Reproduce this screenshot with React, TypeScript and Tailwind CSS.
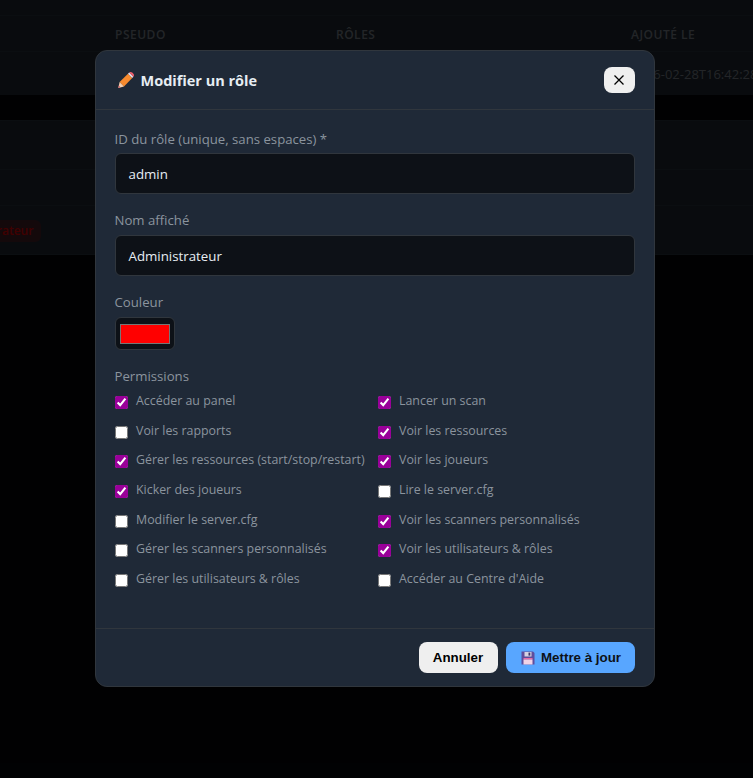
import React from 'react';

const perms: [string, boolean, string, boolean][] = [
  ['Accéder au panel', true, 'Lancer un scan', true],
  ['Voir les rapports', false, 'Voir les ressources', true],
  ['Gérer les ressources (start/stop/restart)', true, 'Voir les joueurs', true],
  ['Kicker des joueurs', true, 'Lire le server.cfg', false],
  ['Modifier le server.cfg', false, 'Voir les scanners personnalisés', true],
  ['Gérer les scanners personnalisés', false, 'Voir les utilisateurs & rôles', true],
  ['Gérer les utilisateurs & rôles', false, "Accéder au Centre d'Aide", false],
];

const Perm = ({ label, checked }: { label: string; checked: boolean }) => (
  <label className="flex items-start gap-[8.5px] h-[20px] text-[12.4px] leading-[20px] font-medium text-[#8b949e]">
    <input type="checkbox" checked={checked} readOnly className="w-[13px] h-[13px] mt-[5px] shrink-0 accent-[#990099]" />
    <span className="whitespace-nowrap">{label}</span>
  </label>
);

const PencilIcon = () => (
  <svg width="16" height="16" viewBox="0 0 16 16" className="shrink-0">
    <path d="M1.6 10 10 1.8l4.2 4.2L6 14.4z" fill="#f78a2e" />
    <path d="M10 1.8l1.2-1.2 4.2 4.2L14.2 6z" fill="#e4e0ec" />
    <path d="M11.2.6c1-.8 2-.8 3 0l1.2 1.2c.8 1 .8 2 0 3z" fill="#f0606e" />
    <path d="M1.6 10 6 14.4.3 15.9z" fill="#f7cfae" />
    <path d="M.9 13.6l1.6 1.6-2.2.7z" fill="#d9606a" />
  </svg>
);

const SaveIcon = () => (
  <svg width="14" height="14" viewBox="0 0 14 14" className="shrink-0">
    <path d="M.5.5h11.5L13.5 2v11.5H.5z" fill="#5f4d9c" />
    <rect x="3.5" y="1" width="7" height="4.5" fill="#d6d2e2" />
    <rect x="7.5" y="1.6" width="1.8" height="3" fill="#3f3566" />
    <rect x="2.5" y="7" width="9" height="1.5" fill="#e86aa6" />
    <rect x="2.5" y="8.5" width="9" height="5" fill="#f2d3e6" />
  </svg>
);

const Field = ({ label, value, first }: { label: string; value: string; first?: boolean }) => (
  <div className="mb-[17px]">
    <div className={`text-[13.2px] leading-[18px] font-medium text-[#8b949e] ${first ? 'mb-[5px]' : 'mb-[6px]'}`}>{label}</div>
    <div className="h-[41px] flex items-center pt-[2px] px-[13px] bg-[#0d1117] border border-[#30363d] rounded-[6px] text-[13.3px] text-[#e6edf3]">
      {value}
    </div>
  </div>
);

export default function App() {
  return (
    <div className="relative w-[753px] h-[778px] overflow-hidden bg-[#05070a] font-['Open_Sans','Noto_Sans',sans-serif]">
      {/* page behind the modal */}
      <div className="h-[95px] bg-[#242e3a]">
        <div className="h-[16px] border-b border-[#2f3a46]" />
        <div className="h-[36px] flex items-center pt-[2px] text-[12px] font-semibold tracking-[0.5px] text-[#8b949e] border-b border-[#2f3a46]">
          <span className="ml-[115px] w-[221px]">PSEUDO</span>
          <span className="w-[295px]">RÔLES</span>
          <span>AJOUTÉ LE</span>
        </div>
        <div className="flex items-center pt-[3px] h-[43px] text-[13px] text-[#8b949e] pl-[631px] whitespace-nowrap">2026-02-28T16:42:28</div>
      </div>
      <div className="h-[25px]" />
      <div className="h-[135px] bg-[#242e3a] border-y border-[#2f3a46]">
        <div className="h-[49px] border-b border-[#2f3a46]" />
        <div className="h-[36px] border-b border-[#2f3a46]" />
        <div className="h-[47px] flex items-center pt-[2px]">
          <span className="ml-[-63px] px-[8px] py-[2px] rounded-[6px] bg-[#ff0000]/20 text-[12px] font-semibold text-[#ff0000]">Administrateur</span>
        </div>
      </div>

      {/* overlay */}
      <div className="absolute inset-0 bg-black/75 flex items-start justify-center pt-[50px] pr-[4px]">
        <div className="w-[560px] h-[637px] flex flex-col bg-[#1f2937] border border-[#30363d] rounded-[12px]">
          <div className="h-[59px] shrink-0 flex items-center justify-between pl-[22px] pr-[19px] border-b border-[#30363d]">
            <div className="flex items-center gap-[7px] text-[14.5px] font-bold text-[#e6edf3]">
              <PencilIcon />
              <span className="pt-[1px]">Modifier un rôle</span>
            </div>
            <button className="w-[31px] h-[26px] flex items-center justify-center rounded-[8px] bg-[#efefef] text-black">
              <svg width="10" height="10" viewBox="0 0 10 10" fill="none" stroke="currentColor" strokeWidth="1.3">
                <path d="M.5.5l9 9M9.5.5l-9 9" />
              </svg>
            </button>
          </div>

          <div className="flex-1 px-[19px] pt-[20px]">
            <Field first label="ID du rôle (unique, sans espaces) *" value="admin" />
            <Field label="Nom affiché" value="Administrateur" />
            <div className="text-[13.2px] leading-[18px] font-medium text-[#8b949e] mb-[6px]">Couleur</div>
            <div className="w-[60px] h-[33px] flex items-center justify-center bg-[#0d1117] border border-[#30363d] rounded-[6px] mb-[17px]">
              <div className="w-[50px] h-[20px] bg-[#ff0000] border border-[#767676]" />
            </div>
            <div className="text-[13.2px] leading-[18px] font-medium text-[#8b949e] mb-[6px]">Permissions</div>
            <div className="grid grid-cols-[255px_1fr] gap-x-[8px] gap-y-[9.7px]">
              {perms.map(([a, ac, b, bc]) => (
                <React.Fragment key={a}>
                  <Perm label={a} checked={ac} />
                  <Perm label={b} checked={bc} />
                </React.Fragment>
              ))}
            </div>
          </div>

          <div className="h-[58px] shrink-0 flex items-start pt-[13px] justify-end gap-[8px] pr-[19px] border-t border-[#30363d] font-['Liberation_Sans',Arial,sans-serif]">
            <button className="w-[79px] h-[31px] rounded-[8px] bg-[#efefef] text-[13.33px] font-bold text-black">Annuler</button>
            <button className="w-[129px] h-[31px] flex items-center justify-center gap-[6px] pl-[2px] rounded-[8px] bg-[#58a6ff] text-[13.33px] font-bold text-[#0d1117]">
              <SaveIcon />
              <span>Mettre à jour</span>
            </button>
          </div>
        </div>
      </div>
    </div>
  );
}
